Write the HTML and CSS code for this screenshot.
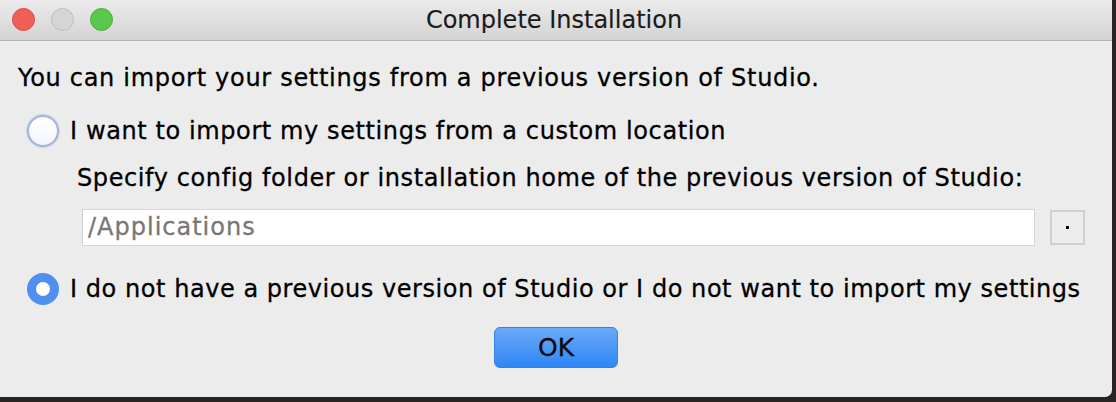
FILE: index.html
```html
<!DOCTYPE html>
<html>
<head>
<meta charset="utf-8">
<link rel="stylesheet" href="styles.css">
</head>
<body>
<div class="window">
  <div class="titlebar">
    <div class="lights">
      <span class="light red"></span>
      <span class="light gray"></span>
      <span class="light green"></span>
    </div>
    <div class="title">Complete Installation</div>
  </div>
  <div class="content">
    <div class="intro">You can import your settings from a previous version of Studio.</div>
    <div class="option">
      <span class="radio"></span>
      <span class="label">I want to import my settings from a custom location</span>
    </div>
    <div class="specify">Specify config folder or installation home of the previous version of Studio:</div>
    <div class="pathrow">
      <div class="field">/Applications</div>
      <div class="browse"><span class="dot"></span></div>
    </div>
    <div class="option option2">
      <span class="radio checked"></span>
      <span class="label">I do not have a previous version of Studio or I do not want to import my settings</span>
    </div>
    <div class="actions">
      <button class="ok">OK</button>
    </div>
  </div>
</div>
</body>
</html>
```
FILE: styles.css
```css
html, body {
  margin: 0;
  padding: 0;
}
body {
  width: 1116px;
  height: 402px;
  background: #2b2224;
  font-family: "DejaVu Sans", "Verdana", sans-serif;
  color: #000;
  overflow: hidden;
}
.window {
  width: 1112px;
  height: 397px;
  background: #ececec;
  border-bottom-right-radius: 7px;
  display: flex;
  flex-direction: column;
}
.titlebar {
  height: 40px;
  background: linear-gradient(#ebebeb, #d4d4d4);
  border-bottom: 1px solid #b2b2b2;
  position: relative;
  display: flex;
  align-items: center;
  justify-content: center;
  flex-shrink: 0;
}
.lights {
  position: absolute;
  left: 12px;
  top: 8px;
  display: flex;
  gap: 16px;
}
.light {
  width: 23px;
  height: 23px;
  border-radius: 50%;
  box-sizing: border-box;
}
.red { background: #f05e56; border: 1px solid #dc4a42; }
.gray { background: #d5d5d5; border: 1px solid #bcbcbc; }
.green { background: #5bc84d; border: 1px solid #4aae3e; }
.title {
  font-size: 24px;
  color: #1a1a1a;
  margin-left: -4px;
  -webkit-text-stroke: 0.15px #1a1a1a;
}
.content {
  display: flex;
  flex-direction: column;
  padding: 22px 0 0 18px;
  font-size: 24px;
  letter-spacing: 0.6px;
  -webkit-text-stroke: 0.3px #000;
}
.intro {
  height: 30px;
  line-height: 30px;
  letter-spacing: 0.7px;
}
.option {
  display: flex;
  align-items: center;
  margin-top: 23px;
  margin-left: 9px;
  height: 30px;
  white-space: nowrap;
}
.radio {
  width: 32px;
  height: 32px;
  box-sizing: border-box;
  border-radius: 50%;
  border: 2px solid #9fb4d6;
  background: linear-gradient(#ffffff, #f2f5fb);
  box-shadow: 0 0 0 1px #c9d5ea;
  margin-right: 11px;
  flex-shrink: 0;
}
.radio.checked {
  background: #ffffff;
  border: 9px solid #4e8fef;
  box-shadow: none;
}
.option2 .label {
  letter-spacing: 0.55px;
}
.specify {
  margin-top: 17px;
  margin-left: 59px;
  height: 30px;
  line-height: 30px;
  white-space: nowrap;
}
.pathrow {
  display: flex;
  align-items: center;
  margin-top: 16px;
  margin-left: 64px;
}
.field {
  width: 953px;
  height: 37px;
  box-sizing: border-box;
  background: #fff;
  border: 1px solid #d6d6d6;
  border-left-color: #cfcfcf;
  color: #777;
  -webkit-text-stroke: 0.3px #777;
  line-height: 35px;
  padding-left: 5px;
  letter-spacing: 1px;
}
.browse {
  margin-left: 15px;
  width: 35px;
  height: 35px;
  box-sizing: border-box;
  border: 2px solid #cfcfcf;
  background: #ececec;
  display: flex;
  align-items: center;
  justify-content: center;
}
.dot {
  width: 3px;
  height: 3px;
  background: #000;
}
.option2 {
  margin-top: 28px;
}
.actions {
  display: flex;
  justify-content: center;
  margin-top: 23px;
  padding-right: 18px;
}
.ok {
  width: 124px;
  height: 41px;
  border-radius: 6px;
  border: 1px solid #3a7ee0;
  background: linear-gradient(#6aaaf8, #2f86f6);
  font-family: "DejaVu Sans", sans-serif;
  font-size: 25px;
  color: #0b0b0b;
  -webkit-text-stroke: 0.3px #0b0b0b;
  padding: 0;
}
```
